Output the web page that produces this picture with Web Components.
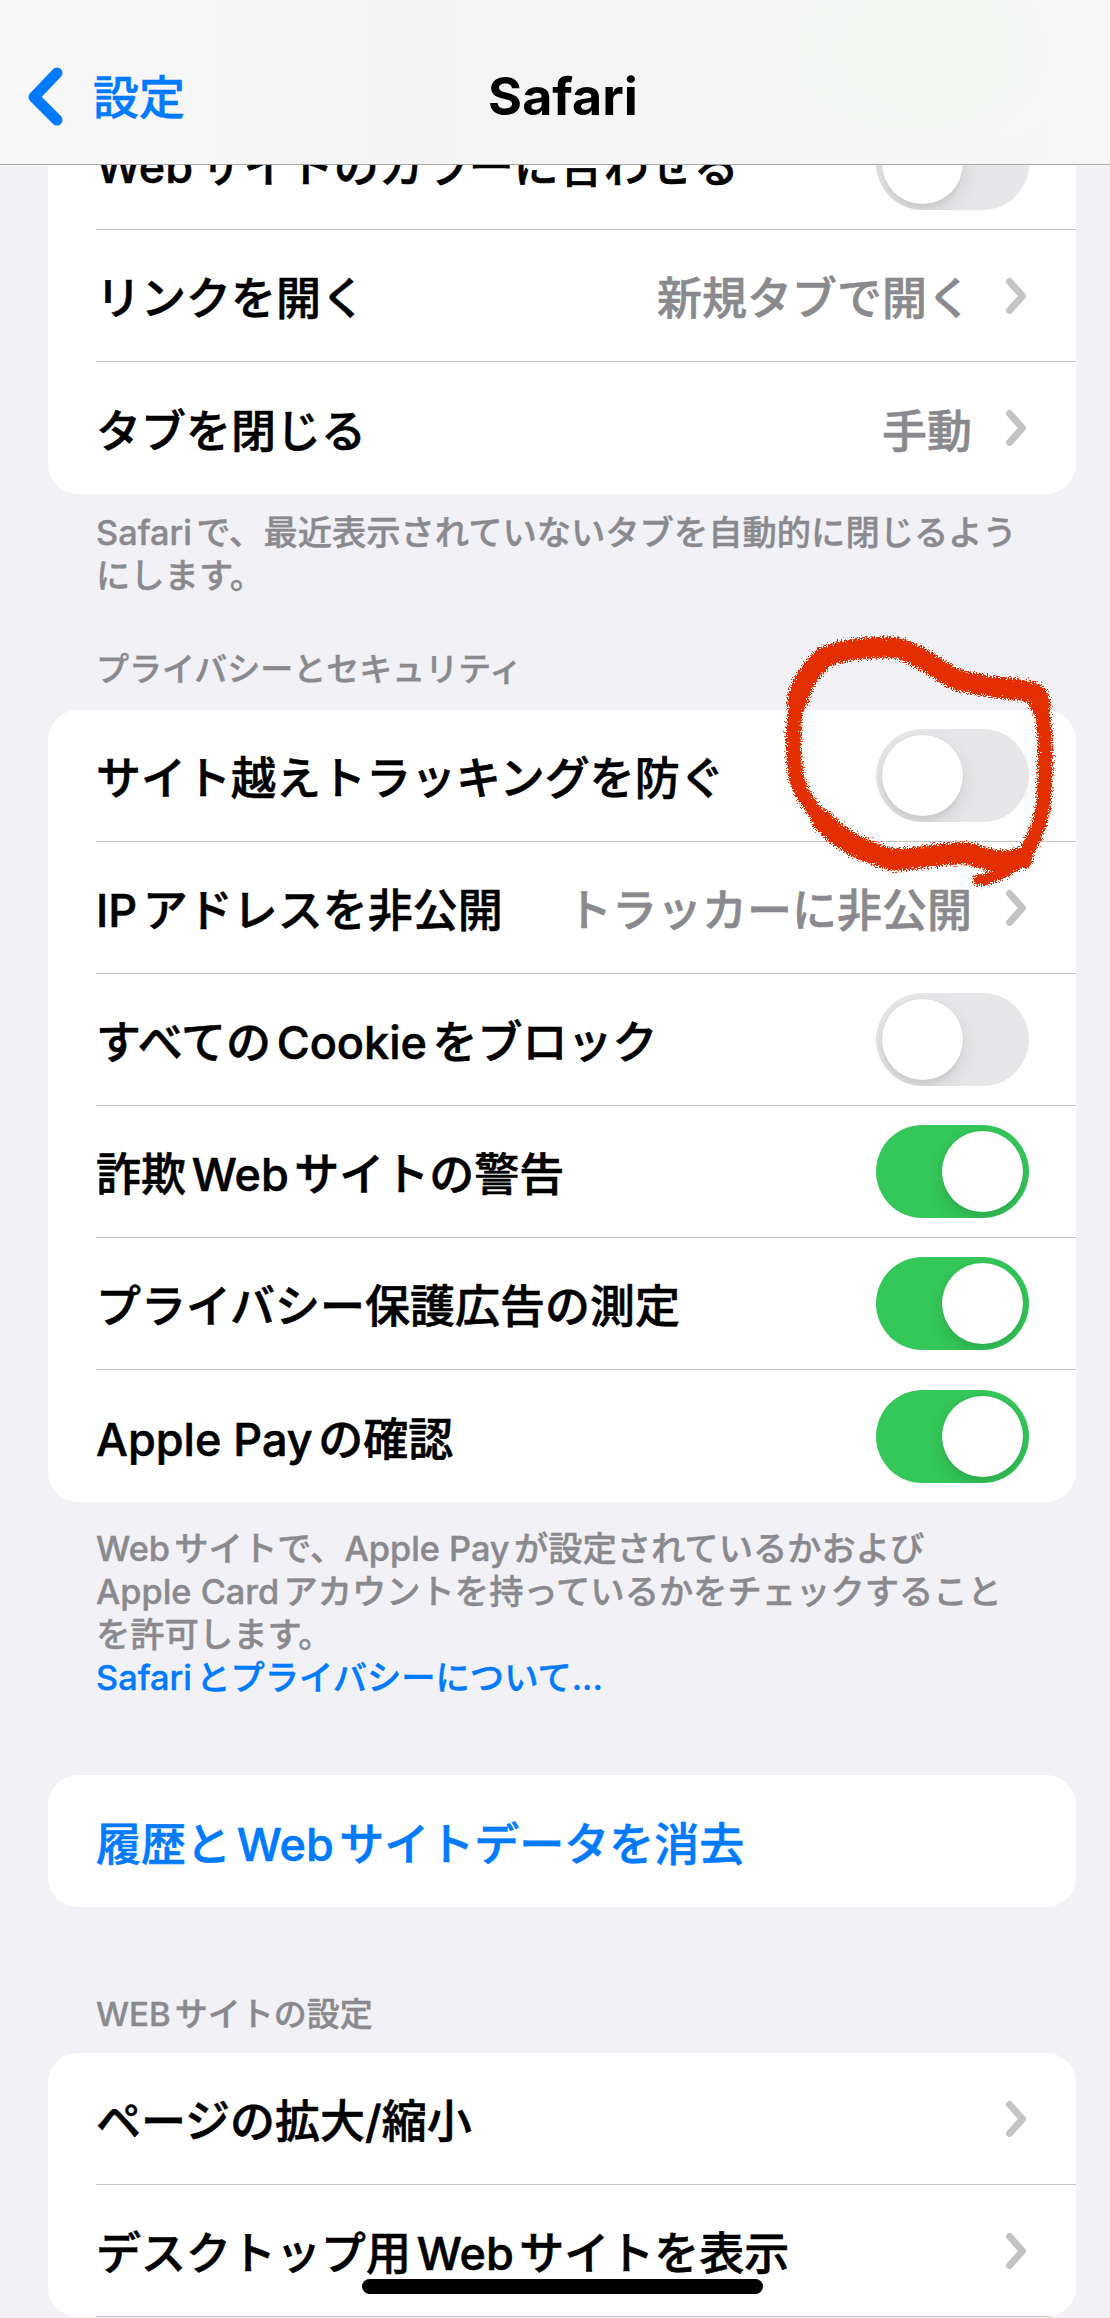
<!DOCTYPE html>
<html lang="ja">
<head>
<meta charset="utf-8">
<title>Safari</title>
<style>
    html, body {
        margin: 0;
        padding: 0;
        height: 2318px;
        overflow: hidden;
        background: #f1f1f6;
        font-family: Inter, "Noto Sans CJK JP", sans-serif;
    }
</style>
</head>
<body>
<settings-page>
    <nav-bar slot="nav" back="設定" title-text="Safari"></nav-bar>

    <row-group>
        <setting-row label="Webサイトのカラーに合わせる" toggle="off"></setting-row>
        <setting-row label="リンクを開く" value="新規タブで開く" chevron></setting-row>
        <setting-row label="タブを閉じる" value="手動" chevron last></setting-row>
    </row-group>
    <group-note style="--top: 17px">Safariで、最近表示されていないタブを自動的に閉じるよう<br>にします。</group-note>

    <group-header style="--top: 51px">プライバシーとセキュリティ</group-header>
    <row-group>
        <setting-row label="サイト越えトラッキングを防ぐ" toggle="off"></setting-row>
        <setting-row label="IPアドレスを非公開" value="トラッカーに非公開" chevron></setting-row>
        <setting-row label="すべてのCookieをブロック" toggle="off"></setting-row>
        <setting-row label="詐欺Webサイトの警告" toggle="on"></setting-row>
        <setting-row label="プライバシー保護広告の測定" toggle="on"></setting-row>
        <setting-row label="Apple Payの確認" toggle="on" last></setting-row>
    </row-group>
    <group-note style="--top: 25px">Webサイトで、Apple Payが設定されているかおよび<br>Apple Cardアカウントを持っているかをチェックすること<br>を許可します。<br><a>Safariとプライバシーについて...</a></group-note>

    <row-group style="--top: 76px">
        <setting-row label="履歴とWebサイトデータを消去" accent last></setting-row>
    </row-group>

    <group-header style="--top: 86px; --bottom: 17px">WEBサイトの設定</group-header>
    <row-group>
        <setting-row label="ページの拡大/縮小" chevron></setting-row>
        <setting-row label="デスクトップ用Webサイトを表示" chevron></setting-row>
    </row-group>

    <red-scribble slot="over"></red-scribble>
    <home-indicator slot="over"></home-indicator>
</settings-page>

<script>
const textAuto = 'text-autospace: normal;'

class SettingsPage extends HTMLElement {
    constructor() {
        super()
        this.attachShadow({mode: 'open'})
        this.shadowRoot.innerHTML = `
            <style>
                :host {
                    display: block;
                    position: relative;
                    width: 1110px;
                    height: 2318px;
                    overflow: hidden;
                    background: #f1f1f6;
                }
                .scroll {
                    display: flex;
                    flex-direction: column;
                    padding: 98px 34px 0 48px;
                }
            </style>
            <slot name="nav"></slot>
            <div class="scroll"><slot></slot></div>
            <slot name="over"></slot>
        `
    }
}

class NavBar extends HTMLElement {
    constructor() {
        super()
        this.attachShadow({mode: 'open'})
    }

    connectedCallback() {
        this.shadowRoot.innerHTML = `
            <style>
                :host {
                    display: grid;
                    grid-template-columns: 1fr auto 1fr;
                    align-items: center;
                    position: absolute;
                    z-index: 2;
                    top: 0;
                    left: 0;
                    right: 0;
                    height: 165px;
                    box-sizing: border-box;
                    padding: 30px 12px 0 28px;
                    border-bottom: 1px solid #a9a9a9;
                    background:
                        radial-gradient(ellipse 170px 120px at 915px 50px, #f1f7f1 0%, rgba(241,247,241,0) 100%),
                        linear-gradient(90deg, #f8f8f8 0%, #f4f4f5 35%, #f6f6f6 100%);
                }
                .back {
                    display: flex;
                    align-items: center;
                    gap: 30px;
                    color: #007aff;
                    font-size: 46px;
                    font-weight: 500;
                    line-height: 60px;
                    -webkit-text-stroke: 0.5px #007aff;
                }
                svg {
                    display: block;
                    width: 35px;
                    height: 60px;
                }
                h1 {
                    margin: 0;
                    font-size: 52px;
                    font-weight: 700;
                    line-height: 60px;
                    color: #000;
                }
            </style>
            <div class="back">
                <svg viewBox="0 0 35 60"><path d="M29 6 L6 30 L29 53" fill="none" stroke="#007aff" stroke-width="11" stroke-linecap="round" stroke-linejoin="round"/></svg>
                <span>${this.getAttribute('back')}</span>
            </div>
            <h1>${this.getAttribute('title-text')}</h1>
        `
    }
}

class RowGroup extends HTMLElement {
    constructor() {
        super()
        this.attachShadow({mode: 'open'})
        this.shadowRoot.innerHTML = `
            <style>
                :host {
                    display: block;
                    margin-top: var(--top, 0);
                    background: #fff;
                    border-radius: 30px;
                    overflow: hidden;
                }
            </style>
            <slot></slot>
        `
    }
}

class SettingRow extends HTMLElement {
    constructor() {
        super()
        this.attachShadow({mode: 'open'})
    }

    connectedCallback() {
        const value = this.getAttribute('value')
        const toggle = this.getAttribute('toggle')
        this.shadowRoot.innerHTML = `
            <style>
                :host {
                    display: block;
                    padding-left: 48px;
                }
                .row {
                    display: flex;
                    align-items: center;
                    height: 132px;
                    box-sizing: border-box;
                    padding-right: 47px;
                    border-bottom: 1px solid #c6c6c8;
                }
                :host([last]) .row { border-bottom: 0; }
                .label {
                    flex: 1;
                    font-size: 45px;
                    font-weight: 500;
                    color: #000;
                    -webkit-text-stroke: 0.6px currentColor;
                    white-space: nowrap;
                    ${textAuto}
                }
                :host([accent]) .label { color: #007aff; }
                .value {
                    font-size: 45px;
                    font-weight: 500;
                    color: #8a8a8e;
                    -webkit-text-stroke: 0.6px currentColor;
                    white-space: nowrap;
                    margin-right: 33px;
                }
                svg {
                    display: block;
                    width: 24px;
                    height: 38px;
                    flex: none;
                }
            </style>
            <div class="row">
                <span class="label">${this.getAttribute('label')}</span>
                ${value ? `<span class="value">${value}</span>` : ''}
                ${this.hasAttribute('chevron') ? `<svg viewBox="0 0 24 38"><path d="M4.5 4.5 L17.5 19 L4.5 33.5" fill="none" stroke="#c4c4c7" stroke-width="7" stroke-linecap="round" stroke-linejoin="round"/></svg>` : ''}
                ${toggle ? `<toggle-switch state="${toggle}"></toggle-switch>` : ''}
            </div>
        `
    }
}

class ToggleSwitch extends HTMLElement {
    constructor() {
        super()
        this.attachShadow({mode: 'open'})
        this.shadowRoot.innerHTML = `
            <style>
                :host {
                    display: block;
                    flex: none;
                    position: relative;
                    width: 153px;
                    height: 93px;
                    border-radius: 47px;
                    overflow: hidden;
                    background: #e7e7ea;
                }
                :host([state="on"]) { background: #34c759; }
                .knob {
                    position: absolute;
                    top: 6px;
                    left: 6px;
                    width: 81px;
                    height: 81px;
                    border-radius: 50%;
                    background: #fff;
                    box-shadow: 0 8px 20px rgba(0,0,0,.1), 0 0 3px rgba(0,0,0,.05), 0 6px 3px rgba(0,0,0,.03);
                }
                :host([state="on"]) .knob { left: 66px; }
            </style>
            <div class="knob"></div>
        `
    }
}

class GroupNote extends HTMLElement {
    constructor() {
        super()
        this.attachShadow({mode: 'open'})
        this.shadowRoot.innerHTML = `
            <style>
                :host {
                    display: block;
                    margin-top: var(--top, 16px);
                    padding-left: 48px;
                    font-size: 34.3px;
                    font-weight: 500;
                    line-height: 43px;
                    color: #8a8a8e;
                    -webkit-text-stroke: 0.4px currentColor;
                    white-space: nowrap;
                    ${textAuto}
                }
                ::slotted(a) { color: #007aff; }
            </style>
            <slot></slot>
        `
    }
}

class GroupHeader extends HTMLElement {
    constructor() {
        super()
        this.attachShadow({mode: 'open'})
        this.shadowRoot.innerHTML = `
            <style>
                :host {
                    display: block;
                    margin-top: var(--top, 0);
                    margin-bottom: var(--bottom, 19px);
                    padding-left: 48px;
                    font-size: 33px;
                    font-weight: 500;
                    line-height: 43px;
                    color: #8a8a8e;
                    -webkit-text-stroke: 0.4px currentColor;
                    white-space: nowrap;
                    ${textAuto}
                }
            </style>
            <slot></slot>
        `
    }
}

class RedScribble extends HTMLElement {
    constructor() {
        super()
        this.attachShadow({mode: 'open'})
        this.shadowRoot.innerHTML = `
            <style>
                :host {
                    display: block;
                    position: absolute;
                    z-index: 1;
                    left: 700px;
                    top: 600px;
                    width: 410px;
                    height: 300px;
                    pointer-events: none;
                }
                svg { display: block; width: 100%; height: 100%; overflow: visible; }
            </style>
            <svg viewBox="0 0 410 300">
                <defs>
                    <filter id="rough" x="-10%" y="-10%" width="120%" height="120%">
                        <feTurbulence type="fractalNoise" baseFrequency="0.8" numOctaves="3" seed="7" result="n"/>
                        <feDisplacementMap in="SourceGraphic" in2="n" scale="11" xChannelSelector="R" yChannelSelector="G"/>
                    </filter>
                </defs>
                <g filter="url(#rough)" fill="none" stroke="#e32d06" stroke-linecap="round" stroke-linejoin="round">
                    <path stroke-width="15" d="M97 100 C92 130 92 150 97 180 C102 195 112 210 125 222 M340 100 C346 125 346 165 344 195 C343 220 335 240 322 258"/>
                    <path stroke-width="21" d="M97 102 C100 85 110 72 123 58 C145 48 170 48 190 47 C215 50 235 68 255 79 C285 88 315 88 332 92 C338 95 340 100 340 106"/>
                    <path stroke-width="22" d="M122 220 C140 240 160 250 190 259 C220 262 245 250 270 254 C285 258 300 266 322 258"/>
                    <path stroke-width="11" d="M278 280 C290 280 302 274 312 268"/>
                </g>
            </svg>
        `
    }
}

class HomeIndicator extends HTMLElement {
    constructor() {
        super()
        this.attachShadow({mode: 'open'})
        this.shadowRoot.innerHTML = `
            <style>
                :host {
                    display: block;
                    position: absolute;
                    z-index: 3;
                    left: 362px;
                    top: 2279px;
                    width: 401px;
                    height: 15px;
                    border-radius: 8px;
                    background: #000;
                }
            </style>
        `
    }
}

customElements.define('settings-page', SettingsPage)
customElements.define('nav-bar', NavBar)
customElements.define('row-group', RowGroup)
customElements.define('setting-row', SettingRow)
customElements.define('toggle-switch', ToggleSwitch)
customElements.define('group-note', GroupNote)
customElements.define('group-header', GroupHeader)
customElements.define('red-scribble', RedScribble)
customElements.define('home-indicator', HomeIndicator)
</script>
</body>
</html>
